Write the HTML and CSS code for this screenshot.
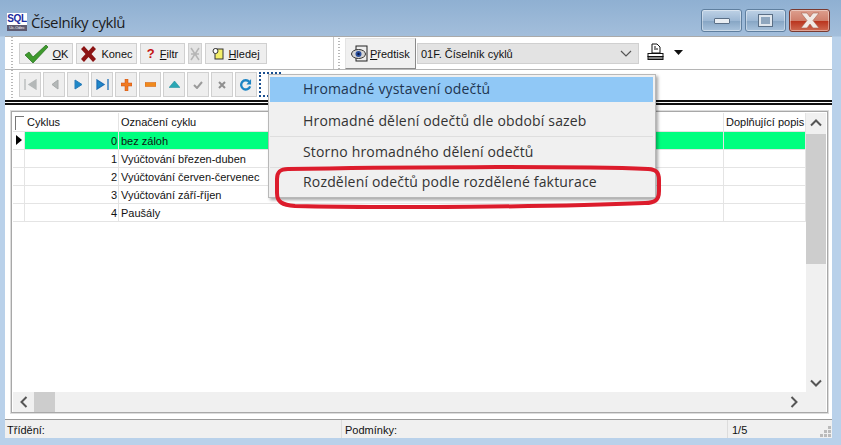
FILE: index.html
```html
<!DOCTYPE html>
<html lang="cs">
<head>
<meta charset="utf-8">
<title>Číselníky cyklů</title>
<link rel="stylesheet" href="styles.css">
</head>
<body>
<div class="window">
  <header class="titlebar">
    <div class="app-icon"><span class="sql">SQL</span><span class="sub">Uc.Odec</span></div>
    <div class="title">Číselníky cyklů</div>
    <div class="caption">
      <div class="cap"><span class="min-glyph"></span></div>
      <div class="cap"><span class="max-glyph"></span></div>
      <div class="cap close"><svg width="24" height="17" viewBox="0 0 24 17"><path d="M3 1h6l3 4 3-4h6l-6 7.500 6 7.500h-6l-3-4-3 4H3l6-7.500z" fill="#f1e9e4" stroke="#a8614f" stroke-width=".6"/></svg></div>
    </div>
  </header>
  <div class="client">
    <div class="row-one">
      <div class="tools-left">
        <i class="grip"></i>
        <button class="btn ok"><svg width="26" height="18" viewBox="0 0 26 18"><path d="M1 10l4-3 4 5L22 0l2 2L9 18z" fill="#3f9a2d" stroke="#1f6d1a" stroke-width=".7"/></svg><span><u>O</u>K</span></button>
        <button class="btn konec"><svg width="17" height="16" viewBox="0 0 17 16"><path d="M1 3l3-3 4.500 5L13 0l3 3-4.500 5 4.500 5-3 3-4.500-5L4 16l-3-3 4.500-5z" fill="#8c1414"/></svg><span>Konec</span></button>
        <button class="btn filtr"><b class="q">?</b><span><u>F</u>iltr</span></button>
        <button class="btn off"><svg width="10" height="14" viewBox="0 0 10 14"><path d="M1 1l8 12M9 1L1 13M1 7h8" stroke="#b5b5b5" stroke-width="1.500" fill="none"/></svg></button>
        <button class="btn hledej"><svg width="12" height="13" viewBox="0 0 12 13"><rect x="3" y="2" width="8" height="10" fill="#f4ef6a" stroke="#333"/><circle cx="3.500" cy="4" r="2.500" fill="#fff" stroke="#333"/></svg><span><u>H</u>ledej</span></button>
      </div>
      <div class="tools-right">
        <i class="grip"></i>
        <button class="predtisk"><svg width="18" height="18" viewBox="0 0 18 18"><rect x="5" y="1" width="11" height="15" fill="#eee" stroke="#222"/><ellipse cx="7.500" cy="9" rx="7" ry="4.500" fill="#d5d5d5" stroke="#333"/><circle cx="7.500" cy="9" r="3" fill="#2a4f9e"/><circle cx="7.500" cy="9" r="1.200" fill="#0a1a40"/></svg><span><u>P</u>ředtisk</span></button>
        <div class="select"><span>01F. Číselník cyklů</span><svg width="12" height="7" viewBox="0 0 12 7"><path d="M1 1l5 5 5-5" fill="none" stroke="#555" stroke-width="1.200"/></svg></div>
        <svg class="printer" width="17" height="18" viewBox="0 0 17 18"><path d="M5 1h5l3 3v6H5zM7 4h2M7 6h4" fill="#fff" stroke="#111"/><rect x="1" y="10.500" width="15" height="3" fill="#fff" stroke="#111"/><rect x="1" y="13.500" width="15" height="3" fill="#888" stroke="#111"/></svg>
        <svg class="caret" width="9" height="5" viewBox="0 0 9 5"><path d="M0 0h9L4.500 5z" fill="#111"/></svg>
      </div>
    </div>
    <div class="row-two">
      <i class="grip"></i>
      <button class="nav"><svg width="13" height="11" viewBox="0 0 13 11"><path d="M1 0v11M12 1v9L5 5.500z" fill="#b4b8b8" stroke="#b4b8b8" stroke-width="1.300"/></svg></button>
      <button class="nav"><svg width="9" height="11" viewBox="0 0 9 11"><path d="M8 1v9L2 5.500z" fill="#b4b8b8" stroke="#a5a8a8"/></svg></button>
      <button class="nav"><svg width="9" height="11" viewBox="0 0 9 11"><path d="M1 1v9l7-4.500z" fill="#1e88c8" stroke="#2a7cb8"/></svg></button>
      <button class="nav"><svg width="13" height="11" viewBox="0 0 13 11"><path d="M1 1v9l7-4.500zM12 0v11" fill="#1e88c8" stroke="#1e70b8" stroke-width="1.300"/></svg></button>
      <button class="nav"><svg width="11" height="12" viewBox="0 0 11 12"><path d="M4 0h3v4h4v3H7v5H4V7H0V4h4z" fill="#f07a22" stroke="#c94a10" stroke-width=".5"/></svg></button>
      <button class="nav"><svg width="11" height="5" viewBox="0 0 11 5"><rect width="11" height="4" y=".5" fill="#f08a1c" stroke="#d05a10" stroke-width=".5"/></svg></button>
      <button class="nav"><svg width="11" height="7" viewBox="0 0 11 7"><path d="M0 6.500L5.500 0 11 6.500z" fill="#2aa7b4" stroke="#1c8a98" stroke-width=".5"/></svg></button>
      <button class="nav"><svg width="10" height="8" viewBox="0 0 10 8"><path d="M1 4l3 3 5-6" fill="none" stroke="#9a9a9a" stroke-width="2"/></svg></button>
      <button class="nav"><svg width="8" height="8" viewBox="0 0 8 8"><path d="M1 1l6 6M7 1L1 7" fill="none" stroke="#8f8f8f" stroke-width="2"/></svg></button>
      <button class="nav"><svg width="12" height="12" viewBox="0 0 13 13"><path d="M11 8a5 5 0 1 1-1-5" fill="none" stroke="#1c84c4" stroke-width="2.500"/><path d="M12 0v6H7z" fill="#1c84c4"/></svg></button>
      <button class="nav focus"></button>
    </div>
    <div class="double-line"></div>
    <div class="grid-frame">
      <div class="grid-scroll">
        <div class="grid">
          <div class="head">
            <div class="ind corner"></div><div class="c1">Cyklus</div><div class="c2">Označení cyklu</div><div class="c3">Doplňující popis</div>
          </div>
          <div class="row sel"><div class="ind arrow"></div><div class="c1 num">0</div><div class="c2">bez záloh</div><div class="c3"></div></div>
          <div class="row"><div class="ind"></div><div class="c1 num">1</div><div class="c2">Vyúčtování březen-duben</div><div class="c3"></div></div>
          <div class="row"><div class="ind"></div><div class="c1 num">2</div><div class="c2">Vyúčtování červen-červenec</div><div class="c3"></div></div>
          <div class="row"><div class="ind"></div><div class="c1 num">3</div><div class="c2">Vyúčtování září-říjen</div><div class="c3"></div></div>
          <div class="row"><div class="ind"></div><div class="c1 num">4</div><div class="c2">Paušály</div><div class="c3"></div></div>
        </div>
        <div class="vbar">
          <svg width="12" height="8" viewBox="0 0 12 8"><path d="M1 6.500l5-5 5 5" fill="none" stroke="#555" stroke-width="2"/></svg>
          <div class="vtrack"><div class="vthumb"></div></div>
          <svg width="12" height="8" viewBox="0 0 12 8"><path d="M1 1.500l5 5 5-5" fill="none" stroke="#555" stroke-width="2"/></svg>
        </div>
      </div>
      <div class="hbar">
        <svg width="8" height="12" viewBox="0 0 8 12"><path d="M6.500 1l-5 5 5 5" fill="none" stroke="#555" stroke-width="2"/></svg>
        <div class="hthumb"></div>
        <svg class="hright" width="8" height="12" viewBox="0 0 8 12"><path d="M1.500 1l5 5-5 5" fill="none" stroke="#555" stroke-width="2"/></svg>
      </div>
    </div>
    <footer class="status">
      <div class="s1">Třídění:</div>
      <div class="s2">Podmínky:</div>
      <div class="s3">1/5</div>
      <svg class="sizer" width="12" height="12" viewBox="0 0 12 12"><path d="M8 1h3v3H8zM8 5h3v3H8zM4 5h3v3H4zM8 9h3v3H8zM4 9h3v3H4zM0 9h3v3H0z" fill="#bbb"/></svg>
    </footer>
  </div>
  <div class="menu">
    <div class="item hot">Hromadné vystavení odečtů</div>
    <div class="item">Hromadné dělení odečtů dle období sazeb</div>
    <div class="item">Storno hromadného dělení odečtů</div>
    <div class="item last">Rozdělení odečtů podle rozdělené fakturace</div>
  </div>
  <svg class="mark" width="392" height="44" viewBox="0 0 392 44"><path d="M16 4C110 2 300 1 376 4c8 .5 11 3 11 11v11c0 9-4 12-14 12-90 4-260 5-350 3C10 40 5 37 5 28V14C5 7 8 4 16 4z" fill="none" stroke="#dc1c2c" stroke-width="4"/></svg>
</div>
</body>
</html>
```
FILE: styles.css
```css
* { box-sizing: border-box; }
html, body { margin: 0; padding: 0; }
body { width: 841px; height: 445px; overflow: hidden; font-family: "Liberation Sans", Arial, sans-serif; font-size: 11px; color: #111; }
button { font: inherit; color: inherit; padding: 0; margin: 0; }
.window { position: relative; width: 841px; height: 445px; padding: 0 9px 7px 5px; display: flex; flex-direction: column; background: linear-gradient(180deg, #8fb0d2 0, #a3bedb 36px, #b9d1ea 37px, #b9d1ea 100%); }
.titlebar { height: 36px; flex: none; display: flex; align-items: flex-start; }
.app-icon { width: 20px; height: 18px; margin: 13px 0 0 2px; background: #fff; display: flex; flex-direction: column; align-items: center; line-height: 1; overflow: hidden; }
.sql { font: bold 10px/12px "Liberation Sans", sans-serif; color: #1a2aa0; letter-spacing: -.3px; }
.sub { font-size: 4px; line-height: 6px; width: 100%; text-align: center; background: #5d5a70; color: #fff; }
.title { margin: 12px 0 0 4px; font: 15px/20px "Open Sans", sans-serif; color: #1c1c1c; letter-spacing: -.42px; }
.caption { margin: 9px 0 0 auto; display: flex; gap: 3px; padding-right: 2px; }
.cap { width: 41px; height: 23px; border: 1px solid #5f7f9f; border-radius: 3px; background: linear-gradient(180deg, #bed2e6 0, #9db8d4 50%, #86a5c4 52%, #a9c3dc 100%); display: flex; align-items: center; justify-content: center; box-shadow: inset 0 0 0 1px rgba(255,255,255,.4); }
.close { background: linear-gradient(180deg, #dd9f8e 0, #cf7f6c 50%, #b9331c 52%, #cf6a52 100%); border-color: #7a3a30; }
.min-glyph { width: 16px; height: 6px; background: #e9eef3; border: 1px solid #5a6f86; border-radius: 1px; margin-top: 1px; }
.max-glyph { width: 13px; height: 11px; border: 2px solid #dfe6ed; outline: 1px solid #5a6f86; background: #8ea6be; }
.client { flex: 1; min-height: 0; background: #fff; border-top: 1px solid #aaa; display: flex; flex-direction: column; position: relative; }
.grip { width: 2px; align-self: stretch; flex: none; background: repeating-linear-gradient(180deg, #b8b8b8 0 1px, transparent 1px 3px); }
.row-one { height: 33px; flex: none; display: flex; border-bottom: 1px solid #b5b5b5; }
.tools-left { width: 329px; display: flex; align-items: flex-start; padding: 6px 0 0 6px; border-right: 1px solid #c9c9c9; }
.tools-left .grip { margin: -6px 6px 0 0; }
.tools-right { flex: 1; display: flex; align-items: flex-start; padding: 1px 0 0 4px; }
.tools-right .grip { margin: 0 5px 0 0; }
.btn { height: 21px; background: #eee; border: 1px solid #d0d0d0; display: flex; align-items: center; justify-content: center; margin-right: 3px; }
.ok { width: 54px; gap: 3px; }
.konec { width: 61px; gap: 4px; }
.filtr { width: 45px; gap: 5px; }
.q { color: #c41414; font-size: 13px; }
.off { width: 14px; background: #e4e4e4; }
.hledej { width: 62px; gap: 4px; }
.predtisk { width: 71px; height: 31px; background: #f0f0f0; border: 1px solid #e4e4e4; border-right-color: #8a8a8a; border-bottom-color: #8a8a8a; display: flex; align-items: center; gap: 1px; padding-left: 5px; margin-right: 1px; }
.select { width: 222px; height: 21px; margin-top: 5px; background: #e3e3e3; border: 1px solid #d0d0d0; display: flex; align-items: center; justify-content: space-between; padding: 0 6px 0 3px; }
.printer { margin: 5px 0 0 8px; }
.caret { margin: 12px 0 0 10px; }
.row-two { height: 30px; flex: none; display: flex; align-items: flex-start; gap: 2px; padding: 2px 0 0 6px; }
.row-two .grip { margin: -2px 4px 0 0; }
.nav { width: 22px; height: 25px; background: #eee; border: 1px solid #d0d0d0; display: flex; align-items: center; justify-content: center; }
.focus { border: 2px dotted #1a4f90; background: #fff; }
.double-line { height: 5px; flex: none; border-top: 2px solid #111; border-bottom: 2px solid #111; }
.grid-frame { flex: 1; min-height: 0; margin: 6px 4px 0 6px; border: 1px solid #a8a8a8; outline: 1px solid #dcdcdc; padding: 1px 1px 0 1px; display: flex; flex-direction: column; }
.grid-scroll { flex: 1; min-height: 0; display: flex; }
.grid { flex: 1; min-width: 0; }
.head, .row { display: grid; grid-template-columns: 12px 94px 605px 1fr; height: 18px; border-bottom: 1px solid #e4e4e4; line-height: 16px; }
.head { height: 19px; }
.head > div, .row > div { border-right: 1px solid #e4e4e4; padding: 1px 0 0 2px; white-space: nowrap; overflow: hidden; }
.head > .corner { border-right: 0; padding: 0; border-top: 1px solid #777; border-left: 1px solid #777; margin: 3px 0 1px 2px; width: 9px; }
.row > .num { text-align: right; padding-right: 1px; }
.sel > div { background: #00ff7f; }
.sel > .ind { background: #fff; }
.row > .arrow { position: relative; width: 12px; height: 17px; }
.row > .arrow::before { content: ""; position: absolute; left: 3px; top: 3px; border-left: 6px solid #000; border-top: 5px solid transparent; border-bottom: 5px solid transparent; }
.vbar { width: 20px; flex: none; background: #f0f0f0; display: flex; flex-direction: column; align-items: center; padding-top: 6px; padding-bottom: 5px; }
.vtrack { flex: 1; width: 100%; margin: 7px 0 5px; }
.vthumb { height: 130px; background: #cdcdcd; }
.hbar { height: 20px; flex: none; background: #f0f0f0; display: flex; align-items: center; padding-left: 7px; }
.hthumb { width: 21px; height: 20px; margin-left: 6px; background: #cdcdcd; }
.hright { margin-left: auto; margin-right: 28px; }
.status { height: 19px; flex: none; margin-top: 6px; background: #f0f0f0; border-top: 1px solid #9a9a9a; display: flex; align-items: center; position: relative; font-size: 11px; }
.s1 { width: 337px; padding-left: 2px; border-right: 1px solid #dcdcdc; height: 100%; line-height: 20px; }
.s2 { width: 386px; padding-left: 3px; border-right: 1px solid #dcdcdc; height: 100%; line-height: 20px; }
.s3 { padding-left: 4px; line-height: 20px; height: 100%; }
.sizer { position: absolute; right: 0; bottom: 1px; }
.menu { position: absolute; left: 268px; top: 74px; width: 388px; height: 124px; padding: 2px 2px 0 1px; background: #f0f0f0; border: 1px solid #b8b8b8; box-shadow: 2px 2px 3px rgba(0,0,0,.35); font: 14px "Open Sans", sans-serif; color: #333; letter-spacing: .17px; }
.item { height: 31px; line-height: 30px; padding-left: 33px; border-bottom: 1px solid #dedede; white-space: nowrap; }
.item.last { border-bottom: 0; line-height: 28px; }
.item.hot { height: 25px; line-height: 24px; margin-bottom: 4px; background: #90c8f6; border-bottom: 0; color: #1f3550; }
.mark { position: absolute; left: 272px; top: 165px; }
```
